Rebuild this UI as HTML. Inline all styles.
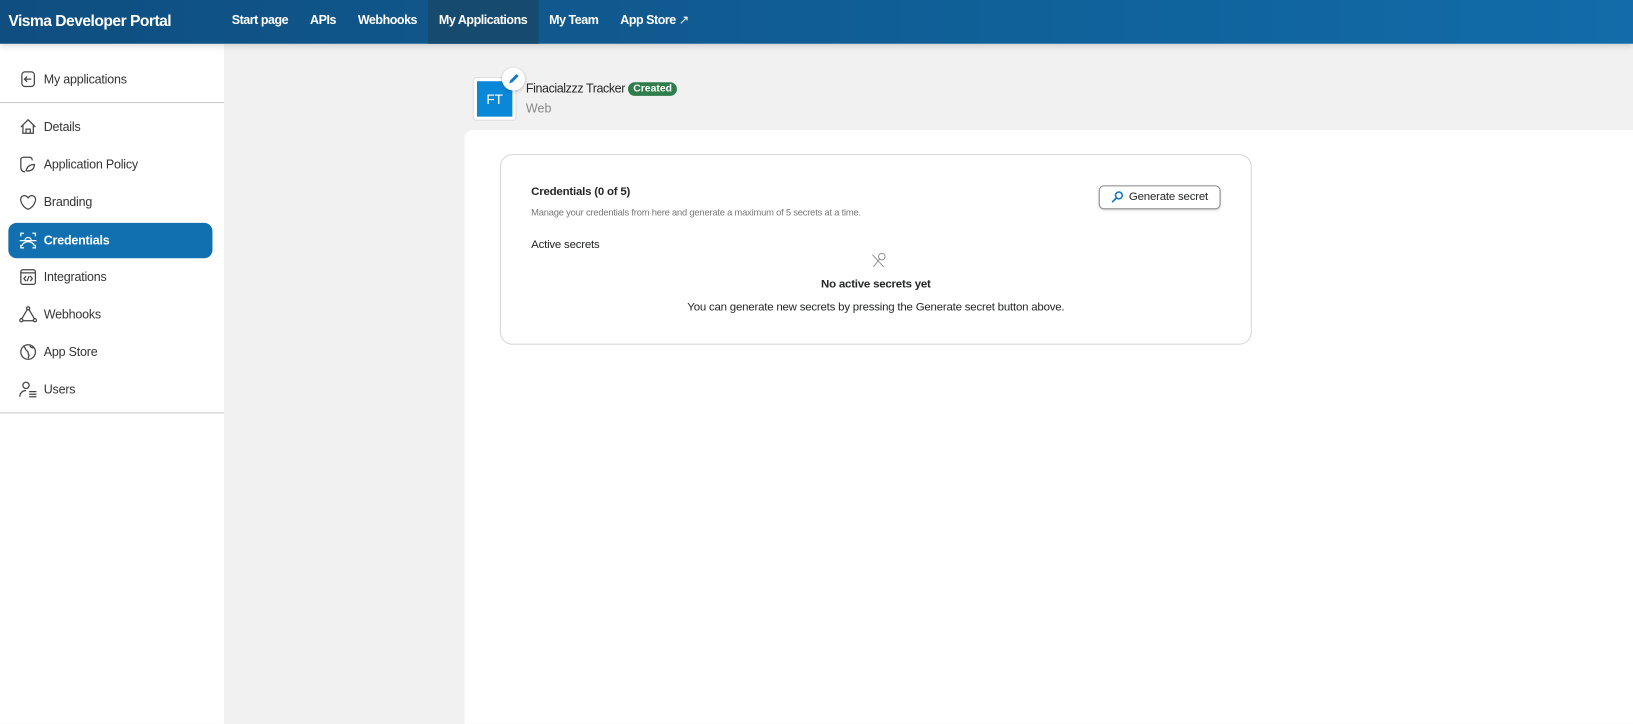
<!DOCTYPE html><html><head><style>
*{box-sizing:border-box;margin:0;padding:0}
html,body{width:1633px;height:723px;overflow:hidden;background:#f1f1f1}
body{font-family:"Liberation Sans",sans-serif;color:#252626}
.wrap{position:absolute;left:0;top:0;width:1568px;height:695px;transform:scale(1.04145);transform-origin:0 0}
.hdr{position:absolute;left:0;top:0;width:1568px;height:42px;background:linear-gradient(90deg,#0f4e80,#116ca9);box-shadow:0 2px 6px rgba(0,0,0,.15);z-index:2;color:#fff}
.brand{position:absolute;left:8px;top:12px;font-size:15px;font-weight:bold;letter-spacing:-.5px}
.nav{position:absolute;left:212px;top:0;display:flex;height:42px}
.nav div{padding:0 10.5px;line-height:38px;font-size:12px;font-weight:bold;letter-spacing:-.45px}
.nav .on{background:#164a6f}
.side{position:absolute;left:0;top:42px;width:215px;height:653px;background:#fff}
.it{position:absolute;left:8px;width:196px;height:34px;display:flex;align-items:center;padding-left:10px;font-size:12px;color:#333;letter-spacing:-.2px}
.it svg{width:18px;height:18px;margin-right:6px;fill:none;stroke:#444;stroke-width:1.2}
.it.on{background:#1170b0;color:#fff;font-weight:bold;border-radius:8px}
.it.on svg{stroke:#fff}
.line{position:absolute;left:0;width:215px;height:1px;background:#c8c8c8}
.panel{position:absolute;left:446px;top:125px;width:1122px;height:570px;background:#fff;border-radius:8px 0 0 0}
.card{position:absolute;left:480px;top:148px;width:722px;height:183px;border:1px solid #d6d6d6;border-radius:12px;background:#fff}
.card div{letter-spacing:-.2px}
</style></head><body><div class="wrap">
<div class="hdr"><div class="brand">Visma Developer Portal</div>
<div class="nav"><div>Start page</div><div>APIs</div><div>Webhooks</div><div class="on">My Applications</div><div>My Team</div><div>App Store <span style="font-weight:normal">&#x2197;</span></div></div></div>
<div class="side">
<div class="it" style="top:17px"><svg viewBox="0 0 18 18"><rect x="3" y="2" width="12" height="14" rx="3"/><path d="M12 9H6M8 6.5 5.5 9 8 11.5"/></svg>My applications</div>
<div class="line" style="top:56px"></div>
<div class="it" style="top:63px"><svg viewBox="0 0 18 18"><path d="M2 9 9 2l7 7M4 7v8h10V7M7 15v-4h4v4"/></svg>Details</div>
<div class="it" style="top:99px"><svg viewBox="0 0 18 18"><path d="M6 16c-3 0-4-2-4-5V4c0-1 1-2 3-2h5c2 0 3 1 3 3M7 15c1-4 4-6 8-6 0 4-3 7-8 6z"/></svg>Application Policy</div>
<div class="it" style="top:135px"><svg viewBox="0 0 18 18"><path d="M9 5C6 1 1 3 2 8c1 4 4 7 7 8 3-1 6-4 7-8 1-5-4-7-7-3z"/></svg>Branding</div>
<div class="it on" style="top:172px"><svg viewBox="0 0 18 18"><path d="M2 5V2h3M13 2h3v3M2 13v3h3M13 16h3v-3M6 9c0-4 6-4 6 0M3 14c1-3 4-4 6-4s5 1 6 4M1 9h16"/></svg>Credentials</div>
<div class="it" style="top:207px"><svg viewBox="0 0 18 18"><rect x="2" y="2" width="14" height="14" rx="2"/><path d="M2 5h14M7 8l-2 2.5L7 13M11 8l2 2.5-2 2.5M10 8l-2 5"/></svg>Integrations</div>
<div class="it" style="top:243px"><svg viewBox="0 0 18 18"><circle cx="9" cy="3" r="1.5"/><circle cx="2.5" cy="14.5" r="1.5"/><circle cx="15.5" cy="14.5" r="1.5"/><path d="M8 4.5 3 13M10 4.5l5 8.5M4 15h10"/></svg>Webhooks</div>
<div class="it" style="top:279px"><svg viewBox="0 0 18 18"><circle cx="9" cy="9" r="7"/><path d="M5 4c2 1 1 3 3 4s0 3 2 4l-1 3M11 3c0 2 2 2 4 2"/></svg>App Store</div>
<div class="it" style="top:315px"><svg viewBox="0 0 18 18"><circle cx="7" cy="5" r="3"/><path d="M1 16c0-4 3-6 6-6M10 11h7M10 13.5h7M10 16h7"/></svg>Users</div>
<div class="line" style="top:354px"></div>
</div>
<div style="position:absolute;left:454px;top:74px;width:42px;height:42px;background:#fff;border:1px solid #ddd;border-radius:3px"><div style="position:absolute;left:3px;top:3px;width:34px;height:34px;background:#0b87d8;color:#fff;font-size:13px;text-align:center;line-height:36px">FT</div></div>
<div style="position:absolute;left:482px;top:65px;width:22px;height:22px;border-radius:50%;background:#fff;box-shadow:0 1px 3px rgba(0,0,0,.25)"><svg viewBox="0 0 22 22" width="22" height="22"><path d="M7 15l1-3 6-6 2 2-6 6z" fill="#1478c0"/></svg></div>
<div style="position:absolute;left:505px;top:78px;font-size:12px;letter-spacing:-.4px">Finacialzzz Tracker <span style="display:inline-block;background:#2e7d4a;color:#fff;font-size:10px;font-weight:bold;padding:1px 5px;border-radius:8px;vertical-align:1px;letter-spacing:0">Created</span></div>
<div style="position:absolute;left:505px;top:97px;font-size:12px;color:#888">Web</div>
<div class="panel"></div>
<div class="card">
<div style="position:absolute;left:29px;top:29px;font-size:11px;font-weight:bold">Credentials (0 of 5)</div>
<div style="position:absolute;left:29px;top:50px;font-size:9px;color:#777">Manage your credentials from here and generate a maximum of 5 secrets at a time.</div>
<div style="position:absolute;left:29px;top:80px;font-size:11px">Active secrets</div>
<div style="position:absolute;left:574px;top:29px;width:117px;height:23px;border:1px solid #888;border-radius:5px;font-size:11px;line-height:21px;padding-left:28px;box-shadow:0 1px 2px rgba(0,0,0,.15)"><svg viewBox="0 0 14 14" width="13" height="13" style="position:absolute;left:10px;top:4px"><circle cx="9" cy="5" r="3.5" fill="none" stroke="#1478c0" stroke-width="1.6"/><path d="M6.5 7.5 2 12" stroke="#1478c0" stroke-width="1.8"/></svg>Generate secret</div>
<svg viewBox="0 0 20 20" width="18" height="18" style="position:absolute;left:354px;top:92px"><circle cx="13" cy="6" r="3.5" fill="none" stroke="#888"/><path d="M11 8 4 17M3 4l12 13" stroke="#888" fill="none"/></svg>
<div style="position:absolute;left:0;width:100%;top:118px;text-align:center;font-size:11px;font-weight:bold">No active secrets yet</div>
<div style="position:absolute;left:0;width:100%;top:140px;text-align:center;font-size:11px">You can generate new secrets by pressing the Generate secret button above.</div>
</div>
</div></body></html>
